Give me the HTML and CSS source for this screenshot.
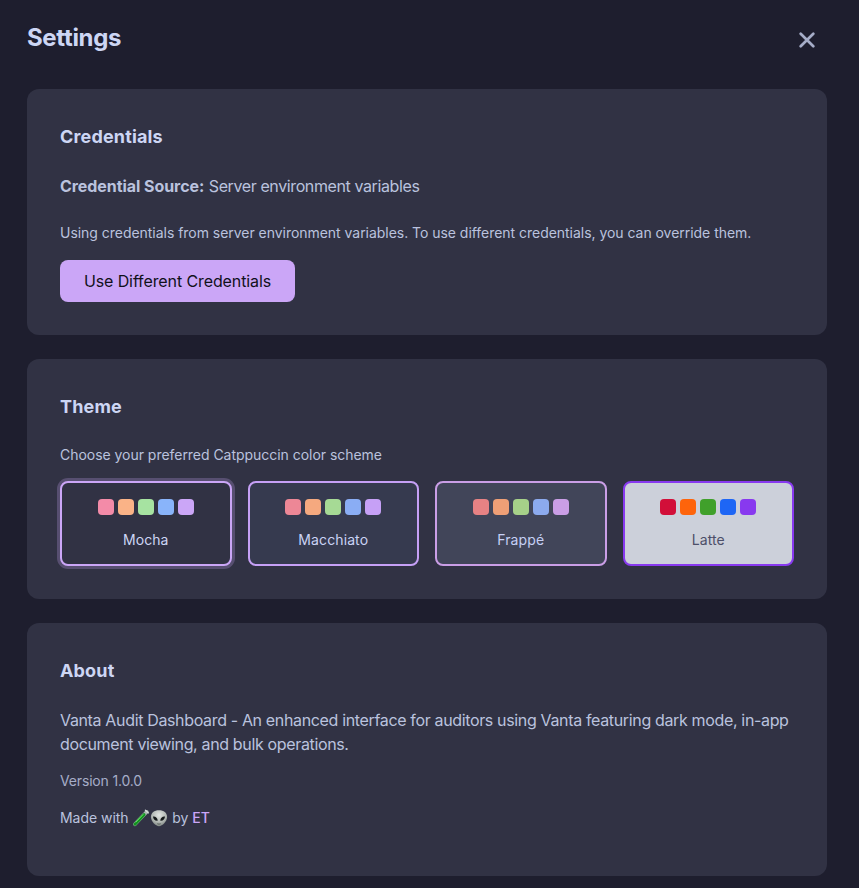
FILE: index.html
```html
<!DOCTYPE html>
<html lang="en">
<head>
<meta charset="utf-8">
<title>Settings</title>
<link rel="stylesheet" href="styles.css">
</head>
<body>
<main class="settings">
  <header class="settings-header">
    <h1>Settings</h1>
    <button class="close" aria-label="Close"><svg width="16" height="16" viewBox="0 0 16 16"><path d="M1.700 1.700 14.300 14.300M14.300 1.700 1.700 14.300"/></svg></button>
  </header>

  <section class="card credentials">
    <h2>Credentials</h2>
    <p class="source"><strong>Credential Source:</strong> <span>Server environment variables</span></p>
    <p class="hint">Using credentials from server environment variables. To use different credentials, you can override them.</p>
    <button class="primary">Use Different Credentials</button>
  </section>

  <section class="card theme">
    <h2>Theme</h2>
    <p class="hint">Choose your preferred Catppuccin color scheme</p>
    <div class="themes">
      <button class="option mocha active"><span class="swatches"><i></i><i></i><i></i><i></i><i></i></span><span class="name">Mocha</span></button>
      <button class="option macchiato"><span class="swatches"><i></i><i></i><i></i><i></i><i></i></span><span class="name">Macchiato</span></button>
      <button class="option frappe"><span class="swatches"><i></i><i></i><i></i><i></i><i></i></span><span class="name">Frappé</span></button>
      <button class="option latte"><span class="swatches"><i></i><i></i><i></i><i></i><i></i></span><span class="name">Latte</span></button>
    </div>
  </section>

  <section class="card about">
    <h2>About</h2>
    <p class="description">Vanta Audit Dashboard - An enhanced interface for auditors using Vanta featuring dark mode, in-app<br>document viewing, and bulk operations.</p>
    <p class="version">Version 1.0.0</p>
    <p class="credit"><span>Made with</span>
      <svg class="tube" width="18" height="18" viewBox="0 0 18 18"><path class="glass" d="M2.900 15.300 14.800 2.800"/><path class="liquid" d="M3 15.200 12 5.700"/><path class="shine" d="M4 13 11 5.600"/><path class="rim" d="M13.400 1.200 16.400 3.900"/></svg><svg class="alien" width="18" height="18" viewBox="0 0 18 18"><defs><radialGradient id="skin" cx=".5" cy=".3" r=".7"><stop offset="0" stop-color="#e2e5e2"/><stop offset=".6" stop-color="#b3b9b5"/><stop offset="1" stop-color="#818985"/></radialGradient></defs><path fill="url(#skin)" d="M9 1.300C4.200 1.300.9 4 .9 8c0 4.200 4.800 9.200 8.100 9.200s8.100-5 8.100-9.200C17.100 4 13.800 1.300 9 1.300Z"/><path class="eye" d="M3 7.600c2.500-.4 4.700 1.500 4.700 4.200C5 12.200 3.200 10.400 3 7.600ZM15 7.600c-2.500-.4-4.700 1.500-4.700 4.200 2.700.4 4.500-1.400 4.700-4.200Z"/><path class="mouth" d="M7.300 14.700q1.700 1 3.400 0"/></svg>
      <span>by</span> <a>ET</a></p>
  </section>
</main>
</body>
</html>
```

FILE: styles.css
```css
* { box-sizing: border-box; }
body { margin: 0; background: #1e1e2e; color: #cdd6f4; font: 16px/24px Inter, sans-serif; }
h1, h2, p { margin: 0; }
button { font: inherit; border: 0; padding: 0; }

.settings { width: 827px; padding: 20px 0 12px 27px; }
.settings-header { display: flex; justify-content: space-between; height: 69px; }
h1 { font-size: 24px; line-height: 36px; font-weight: 700; letter-spacing: -.34px; }
.close { width: 40px; height: 40px; background: none; display: flex; align-items: center; justify-content: center; }
.close svg { fill: none; stroke: #a6adc8; stroke-width: 2.7; stroke-linecap: round; }

.card { background: #313244; border-radius: 12px; padding: 33px; margin-bottom: 24px; }
.credentials { height: 246px; }
.theme { height: 240px; }
.about { height: 253px; margin-bottom: 0; }
h2 { font-size: 18px; line-height: 28px; font-weight: 700; letter-spacing: .16px; padding-top: 1px; margin-bottom: 23px; }
p { color: #bac2de; }

.source { margin-bottom: 24px; }
.source strong { font-weight: 700; letter-spacing: -.06px; }
.source span { letter-spacing: -.39px; }
.hint { font-size: 14px; line-height: 22px; white-space: nowrap; letter-spacing: -.034px; }
.primary { display: block; margin-top: 16px; height: 42px; width: 235px; background: #cba6f7; color: #11111b; border-radius: 8px; letter-spacing: -.1px; }

.themes { display: grid; grid-template-columns: repeat(4, 1fr); gap: 16px; margin-top: 15px; }
.option { height: 85px; border: 2px solid; border-radius: 8px; display: flex; flex-direction: column; align-items: center; padding-top: 16px; font-size: 14px; }
.swatches { display: flex; gap: 4px; margin-bottom: 13px; }
.swatches i { width: 16px; height: 16px; border-radius: 4px; }
.name { color: #cdd6f4; letter-spacing: .1px; }

.mocha { background: #313244; border-color: #cba6f7; }
.active { box-shadow: 0 0 0 3px rgba(203, 166, 247, .25); }
.mocha i:nth-child(1) { background: #f38ba8; }
.mocha i:nth-child(2) { background: #fab387; }
.mocha i:nth-child(3) { background: #a6e3a1; }
.mocha i:nth-child(4) { background: #89b4fa; }
.mocha i:nth-child(5) { background: #cba6f7; }

.macchiato { background: #363a4f; border-color: #c6a0f6; }
.macchiato .name { color: #cad3f5; }
.macchiato i:nth-child(1) { background: #ed8796; }
.macchiato i:nth-child(2) { background: #f5a97f; }
.macchiato i:nth-child(3) { background: #a6da95; }
.macchiato i:nth-child(4) { background: #8aadf4; }
.macchiato i:nth-child(5) { background: #c6a0f6; }

.frappe { background: #414559; border-color: #ca9ee6; }
.frappe .name { color: #c6d0f5; }
.frappe i:nth-child(1) { background: #e78284; }
.frappe i:nth-child(2) { background: #ef9f76; }
.frappe i:nth-child(3) { background: #a6d189; }
.frappe i:nth-child(4) { background: #8caaee; }
.frappe i:nth-child(5) { background: #ca9ee6; }

.latte { background: #ccd0da; border-color: #8839ef; }
.latte .name { color: #4c4f69; }
.latte i:nth-child(1) { background: #d20f39; }
.latte i:nth-child(2) { background: #fe640b; }
.latte i:nth-child(3) { background: #40a02b; }
.latte i:nth-child(4) { background: #1e66f5; }
.latte i:nth-child(5) { background: #8839ef; }

.description { white-space: nowrap; letter-spacing: -.348px; margin-bottom: 13px; }
.version, .credit { font-size: 14px; }
.version { color: #a6adc8; letter-spacing: -.16px; margin-bottom: 13px; }
.credit { letter-spacing: -.04px; }
.tube, .alien { fill: none; vertical-align: -4px; }
.tube path { stroke-linecap: round; }
.glass { stroke: #a5b5ad; stroke-width: 3.6; }
.liquid { stroke: #149222; stroke-width: 3; }
.shine { stroke: #5fe45c; stroke-width: 1; }
.rim { stroke: #d6dcda; stroke-width: 1.3; }
.eye { fill: #15191a; }
.mouth { stroke: #4b514e; stroke-width: .8; }
a { color: #cba6f7; font-weight: 500; }
```
